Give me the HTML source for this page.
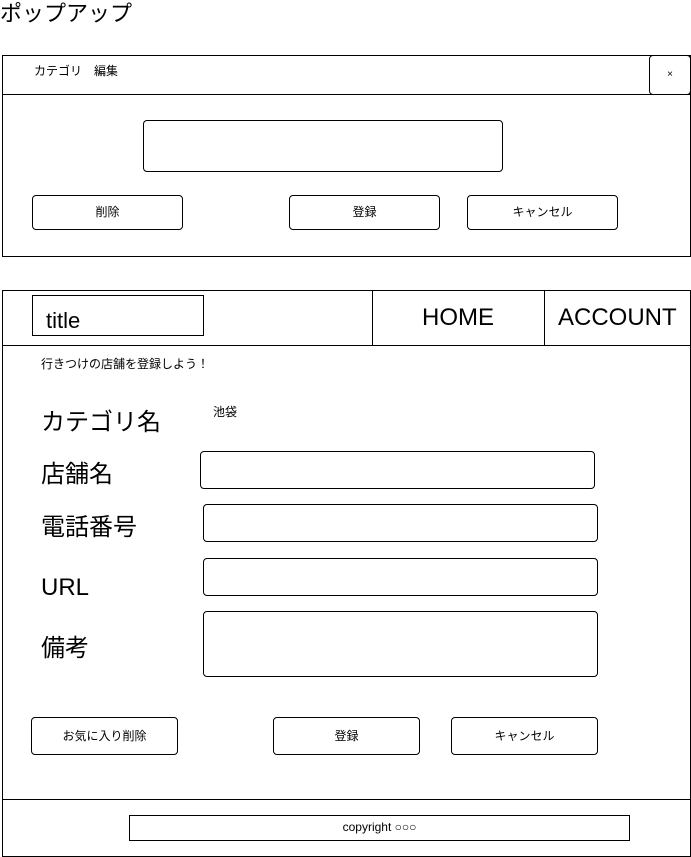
<!DOCTYPE html>
<html><head><meta charset="utf-8"><style>
body{margin:0;width:691px;height:857px;background:#fff;position:relative;font-family:"Liberation Sans","Noto Sans CJK JP",sans-serif;color:#000;overflow:hidden}
.a{position:absolute;box-sizing:border-box}
.b{border:1px solid #000}
.r{border-radius:4px}
.t{position:absolute;white-space:nowrap;line-height:1}
.btn{display:flex;align-items:center;justify-content:center;font-size:12px;padding-bottom:2px}
</style></head><body>
<div class="t" style="left:0;top:3px;font-size:22px">ポップアップ</div>

<div class="a b" style="left:2px;top:55px;width:689px;height:202px"></div>
<div class="a" style="left:2px;top:94px;width:689px;height:1px;background:#000"></div>
<div class="t" style="left:34px;top:65px;font-size:12px">カテゴリ　編集</div>
<div class="a b r btn" style="left:649px;top:55px;width:42px;height:40px;font-size:10px;background:#fff">×</div>
<div class="a b r" style="left:143px;top:120px;width:360px;height:52px"></div>
<div class="a b r btn" style="left:32px;top:195px;width:151px;height:35px">削除</div>
<div class="a b r btn" style="left:289px;top:195px;width:151px;height:35px">登録</div>
<div class="a b r btn" style="left:467px;top:195px;width:151px;height:35px">キャンセル</div>

<div class="a b" style="left:2px;top:290px;width:689px;height:567px"></div>
<div class="a" style="left:2px;top:345px;width:689px;height:1px;background:#000"></div>
<div class="a b" style="left:32px;top:295px;width:172px;height:41px"></div>
<div class="t" style="left:46px;top:310px;font-size:22px">title</div>
<div class="a" style="left:372px;top:290px;width:1px;height:56px;background:#000"></div>
<div class="a" style="left:544px;top:290px;width:1px;height:56px;background:#000"></div>
<div class="t" style="left:422px;top:306px;font-size:24px">HOME</div>
<div class="t" style="left:558px;top:306px;font-size:24px">ACCOUNT</div>
<div class="t" style="left:41px;top:358px;font-size:12px">行きつけの店舗を登録しよう！</div>
<div class="t" style="left:41px;top:411px;font-size:24px">カテゴリ名</div>
<div class="t" style="left:213px;top:406px;font-size:12px">池袋</div>
<div class="t" style="left:41px;top:463px;font-size:24px">店舗名</div>
<div class="t" style="left:41px;top:516px;font-size:24px">電話番号</div>
<div class="t" style="left:41px;top:576px;font-size:24px">URL</div>
<div class="t" style="left:41px;top:637px;font-size:24px">備考</div>
<div class="a b r" style="left:200px;top:451px;width:395px;height:38px"></div>
<div class="a b r" style="left:203px;top:504px;width:395px;height:38px"></div>
<div class="a b r" style="left:203px;top:558px;width:395px;height:38px"></div>
<div class="a b r" style="left:203px;top:611px;width:395px;height:66px"></div>
<div class="a b r btn" style="left:31px;top:717px;width:147px;height:38px">お気に入り削除</div>
<div class="a b r btn" style="left:273px;top:717px;width:147px;height:38px">登録</div>
<div class="a b r btn" style="left:451px;top:717px;width:147px;height:38px">キャンセル</div>
<div class="a" style="left:2px;top:799px;width:689px;height:1px;background:#000"></div>
<div class="a b btn" style="left:129px;top:815px;width:501px;height:26px">copyright ○○○</div>
</body></html>
